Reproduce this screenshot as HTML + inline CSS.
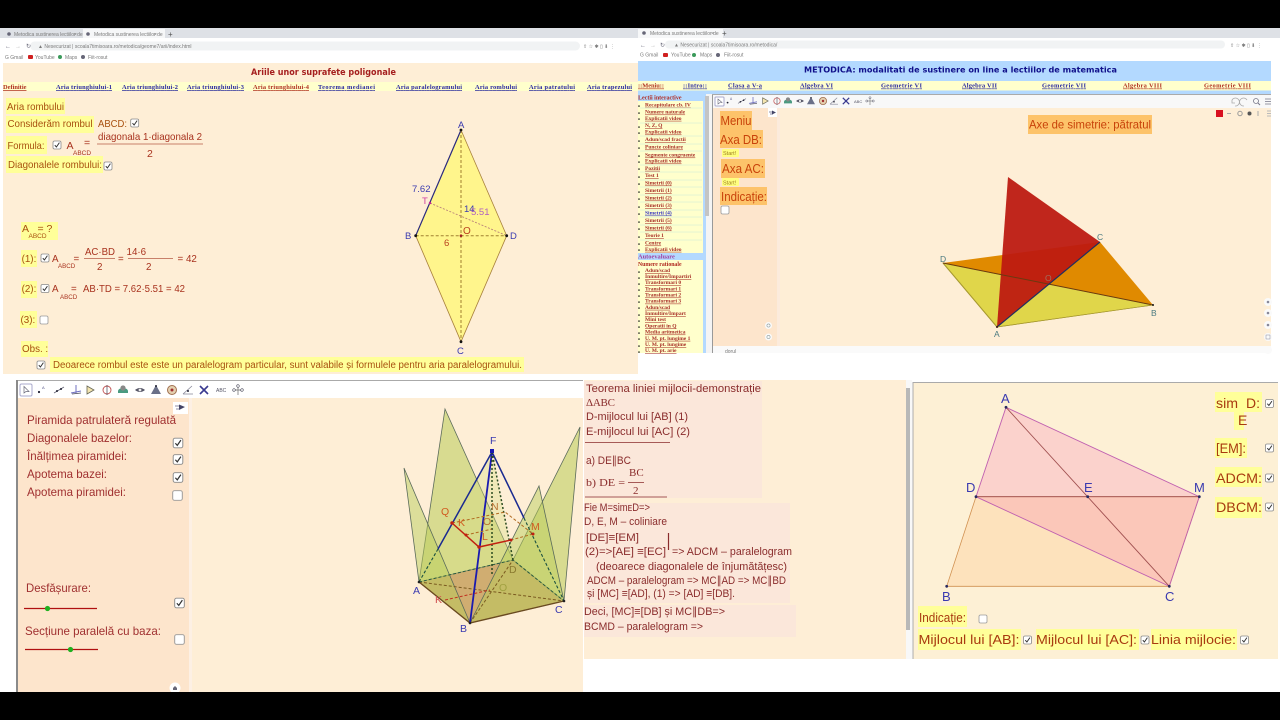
<!DOCTYPE html>
<html lang="ro"><head><meta charset="utf-8"><title>Metodica</title>
<style>
html,body{margin:0;padding:0;background:#fff;width:1280px;height:720px;overflow:hidden}
svg{display:block;filter:blur(.35px)}
text{font-family:"Liberation Sans",sans-serif}
.r{fill:#a8321e}
.o{fill:#a8500f}
.h{fill:#ffff99}
.nav{font:bold 6.4px "Liberation Serif",serif;text-decoration:underline;fill:#2a2aa0}
.navr{fill:#b03020}
.sb{font:bold 5.5px "Liberation Serif",serif;text-decoration:underline;fill:#a83028}
.c{fill:#8a2c2c;font-size:11px}
.g{fill:#7a7a7a;font-size:5px}
.bl{fill:#3a3ab0}
</style></head><body>
<svg width="1280" height="720" viewBox="0 0 1280 720" xmlns="http://www.w3.org/2000/svg">
<defs>
<g id="cb"><rect x="-4" y="-4" width="8" height="8" rx="1.5" fill="#fff" stroke="#8a8a8a" stroke-width=".8"/><path d="M-2.2 .2L-.6 2L2.4-2.4" fill="none" stroke="#333" stroke-width="1"/></g>
<g id="ce"><rect x="-4" y="-4" width="8" height="8" rx="1.5" fill="#fff" stroke="#9a9a9a" stroke-width=".8"/></g>
<g id="t1"><circle cx="-3" cy="2" r="1.1" fill="#223"/><text x="0" y="-1" font-size="4" fill="#558">A</text></g>
<g id="t2"><path d="M-5 3L5-3" stroke="#667" stroke-width=".8"/><circle cx="-2" cy="1" r="1" fill="#223"/><circle cx="2" cy="-1" r="1" fill="#223"/></g>
<g id="t3"><path d="M-5 3L5 1M0-5V3" stroke="#7070c0" stroke-width="1"/><path d="M-4 4L5 3" stroke="#445" stroke-width=".8"/></g>
<g id="t4"><path d="M-3-4L4 0L-3 4Z" fill="#f5e6b0" stroke="#665" stroke-width=".8"/></g>
<g id="t5"><circle r="4" fill="none" stroke="#c05050" stroke-width=".9"/><path d="M0-5V5" stroke="#445" stroke-width=".7"/></g>
<g id="t6"><path d="M-5 1A5 3 0 0 1 5 1V3H-5Z" fill="#4a9a80"/><circle cy="-2" r="2.6" fill="#888"/></g>
<g id="t7"><path d="M-5 0Q0-4 5 0Q0 4-5 0Z" fill="#556"/><circle r="1.4" fill="#eee"/></g>
<g id="t8"><path d="M0-5L5 4H-5Z" fill="#6a7088"/><circle cy="-4" r="1" fill="#223"/></g>
<g id="t9"><circle r="4.5" fill="#e4d0b0" stroke="#a07050"/><circle r="1.5" fill="#a03030"/></g>
<g id="t10"><path d="M-5 4L4-4M-5 4H5" stroke="#889" stroke-width=".8" fill="none"/><circle cx="0" cy="1" r="1" fill="#223"/></g>
<g id="t11"><path d="M-4-4L4 4M4-4L-4 4" stroke="#3a3a90" stroke-width="1.6"/></g>
<g id="t13"><path d="M0-5V5M-5 0H5" stroke="#888" stroke-width=".9"/><circle cx="-4" r="1.3" fill="#fff" stroke="#445" stroke-width=".6"/><circle cy="-4" r="1.3" fill="#fff" stroke="#445" stroke-width=".6"/><circle cx="4" r="1.3" fill="#fff" stroke="#445" stroke-width=".6"/></g>
</defs>

<rect width="1280" height="720" fill="#fff"/>

<!-- PANEL 1 -->
<rect x="0" y="28" width="638" height="10" fill="#dee1e6"/>
<rect x="83" y="29" width="82" height="9" fill="#f6f7f8"/>
<circle cx="9" cy="34" r="1.8" fill="#667"/><text x="14" y="36" class="g">Metodica sustinerea lectiilor de</text><text x="74" y="36" class="g">×</text>
<circle cx="88" cy="34" r="1.8" fill="#667"/><text x="94" y="36" class="g">Metodica sustinerea lectiilor de</text><text x="154" y="36" class="g">×</text><text x="168" y="37" font-size="8" fill="#555">+</text>
<rect x="0" y="38" width="638" height="25" fill="#fff"/>
<rect x="30" y="41.5" width="550" height="9" rx="4.5" fill="#f1f3f4"/>
<text x="5" y="48" font-size="6" fill="#667">←</text><text x="15" y="48" font-size="6" fill="#bbb">→</text><text x="26" y="48" font-size="6" fill="#667">↻</text>
<text x="38" y="48" class="g">▲ Nesecurizat | scoala7timisoara.ro/metodica/geome7/arii/index.html</text>
<text x="583" y="48" class="g">⇧ ☆ ✱ ▯ ⬇ ⋮</text>
<text x="5" y="59" class="g">G Gmail</text><rect x="28" y="55" width="5" height="4" rx="1" fill="#d02020"/><text x="35" y="59" class="g">YouTube</text><circle cx="60" cy="57" r="2" fill="#3a9a5a"/><text x="65" y="59" class="g">Maps</text><circle cx="83" cy="57" r="2" fill="#667"/><text x="88" y="59" class="g">Fiit-rosut</text>
<rect x="3" y="63" width="635" height="311" fill="#feeed6"/>
<text x="251" y="75" style="font-family:'DejaVu Sans',sans-serif;font-weight:bold;font-size:8.8px" fill="#a51e1e" textLength="145" lengthAdjust="spacingAndGlyphs">Ariile unor suprafete poligonale</text>
<rect x="3" y="82" width="635" height="9" fill="#ffffcc"/>
<g class="nav">
<text x="3" y="89" class="nav navr">Definitie</text>
<text x="56" y="89" class="nav" textLength="56">Aria triunghiului-1</text>
<text x="122" y="89" class="nav" textLength="56">Aria triunghiului-2</text>
<text x="187" y="89" class="nav" textLength="57">Aria triunghiului-3</text>
<text x="253" y="89" class="nav navr" textLength="56">Aria triunghiului-4</text>
<text x="318" y="89" class="nav" textLength="57">Teorema medianei</text>
<text x="396" y="89" class="nav" textLength="66">Aria paralelogramului</text>
<text x="475" y="89" class="nav" textLength="42">Aria rombului</text>
<text x="529" y="89" class="nav" textLength="46">Aria patratului</text>
<text x="587" y="89" class="nav" textLength="45">Aria trapezului</text>
</g>
<g class="h">
<rect x="6" y="98" width="59" height="16"/><rect x="6" y="116" width="88" height="17"/><rect x="6" y="136" width="41" height="18"/><rect x="6" y="156" width="97" height="17"/>
<rect x="21" y="222" width="37" height="18"/><rect x="21" y="250" width="16" height="17"/><rect x="21" y="281" width="16" height="17"/><rect x="20" y="311" width="17" height="17"/>
<rect x="21" y="341" width="27" height="16"/><rect x="50" y="357" width="474" height="15"/>
</g>
<g font-size="10.5" class="o">
<text x="7" y="110" textLength="57" lengthAdjust="spacingAndGlyphs">Aria rombului</text>
<text x="7.5" y="127" textLength="85" lengthAdjust="spacingAndGlyphs">Considerăm rombul</text>
<text x="98" y="127" textLength="29" lengthAdjust="spacingAndGlyphs">ABCD:</text>
<text x="7.5" y="149" textLength="37" lengthAdjust="spacingAndGlyphs">Formula:</text>
<text x="8" y="168" textLength="94" lengthAdjust="spacingAndGlyphs">Diagonalele rombului:</text>
<text x="22" y="232">A</text><text x="28.5" y="238" font-size="6.5">ABCD</text><text x="37.5" y="232">= ?</text>
</g>
<g font-size="10.5" class="r">
<text x="66.5" y="149">A</text><text x="73" y="155" font-size="6.5">ABCD</text><text x="84" y="146">=</text>
<text x="98" y="140" textLength="104" lengthAdjust="spacingAndGlyphs">diagonala 1·diagonala 2</text>
<text x="147" y="157">2</text>
</g>
<rect x="97" y="143.5" width="106" height="1" fill="#c8806a"/>
<use href="#cb" x="134.7" y="123"/><use href="#cb" x="57" y="145"/><use href="#cb" x="108" y="166"/>
<g font-size="9.8" class="r">
<text x="21.6" y="262" class="o">(1):</text><text x="52" y="262">A</text><text x="58" y="268" font-size="6.2">ABCD</text><text x="73.5" y="262">=</text>
<text x="85" y="255" textLength="30" lengthAdjust="spacingAndGlyphs">AC·BD</text><text x="97" y="270">2</text><text x="118" y="262">=</text>
<text x="126.5" y="255">14·6</text><text x="146" y="270">2</text><text x="177.5" y="262">= 42</text>
<text x="21.6" y="292" class="o">(2):</text><text x="52" y="292">A</text><text x="60" y="299" font-size="6.2">ABCD</text><text x="71" y="292">=</text>
<text x="83" y="292" textLength="102" lengthAdjust="spacingAndGlyphs">AB·TD = 7.62·5.51 = 42</text>
<text x="20.5" y="323" class="o">(3):</text><text x="22" y="352" class="o">Obs. :</text>
<text x="53" y="368" class="o" textLength="469" lengthAdjust="spacingAndGlyphs">Deoarece rombul este este un paralelogram particular, sunt valabile și formulele pentru aria paralelogramului.</text>
</g>
<rect x="84" y="258" width="31" height="1" fill="#c8806a"/><rect x="128" y="258" width="45" height="1" fill="#c8806a"/>
<use href="#cb" x="45" y="258"/><use href="#cb" x="45" y="288.5"/><use href="#ce" x="44" y="320"/><use href="#cb" x="41" y="365"/>
<!-- rhombus -->
<path d="M461 130L506.7 235.7L461 341.7L415.7 235.7Z" fill="#fff58c" stroke="#a8803c" stroke-width=".8"/>
<path d="M461 130L415.7 235.7" stroke="#2a2a80" stroke-width="1.2"/>
<path d="M461 130V341.7M415.7 235.7H506.7" stroke="#a08030" stroke-width="1" stroke-dasharray="3 2" fill="none"/>
<path d="M430 203L506.7 235.7" stroke="#b8807a" stroke-width=".9" stroke-dasharray="2 1.5"/>
<g fill="#111"><circle cx="461" cy="130" r="1.4"/><circle cx="415.7" cy="235.7" r="1.4"/><circle cx="506.7" cy="235.7" r="1.4"/><circle cx="461" cy="341.7" r="1.4"/></g>
<circle cx="461" cy="235.7" r="1.3" fill="#a02020"/><circle cx="430" cy="203" r="1.2" fill="#c02090"/>
<g font-size="9.5">
<text x="458" y="128" class="bl">A</text><text x="412" y="192" class="bl">7.62</text><text x="422" y="204" fill="#d040a0">T</text>
<text x="464" y="212" class="bl">14</text><text x="471" y="215" fill="#b060c0">5.51</text><text x="463" y="234" fill="#b84020" font-size="10">O</text>
<text x="405" y="239" class="bl">B</text><text x="510" y="239" class="bl">D</text><text x="444" y="246" fill="#b84020">6</text><text x="457" y="354" class="bl">C</text>
</g>

<!-- PANEL 2 -->
<rect x="638" y="28" width="642" height="10" fill="#dee1e6"/>
<rect x="638" y="29" width="85" height="9" fill="#f6f7f8"/>
<circle cx="644" cy="33" r="1.8" fill="#667"/><text x="650" y="35" class="g">Metodica sustinerea lectiilor de</text><text x="711" y="35" class="g">×</text><text x="722" y="36" font-size="8" fill="#555">+</text>
<rect x="638" y="38" width="642" height="23" fill="#fff"/>
<rect x="665" y="40.5" width="560" height="8" rx="4" fill="#f1f3f4"/>
<text x="640" y="47" font-size="6" fill="#667">←</text><text x="650" y="47" font-size="6" fill="#bbb">→</text><text x="660" y="47" font-size="6" fill="#667">↻</text>
<text x="674" y="46.5" class="g">▲ Nesecurizat | scoala7timisoara.ro/metodica/</text>
<text x="1230" y="47" class="g">⇧ ☆ ✱ ▯ ⬇ ⋮</text>
<text x="640" y="56.5" class="g">G Gmail</text><rect x="663" y="53" width="5" height="4" rx="1" fill="#d02020"/><text x="671" y="56.5" class="g">YouTube</text><circle cx="694" cy="55" r="2" fill="#3a9a5a"/><text x="700" y="56.5" class="g">Maps</text><circle cx="718" cy="55" r="2" fill="#667"/><text x="724" y="56.5" class="g">Fiit-rosut</text>
<rect x="638" y="61" width="633" height="20" fill="#b3d9ff"/>
<text x="804" y="72.5" style="font-family:'DejaVu Sans',sans-serif;font-weight:bold;font-size:8.3px" fill="#10108a" textLength="313" lengthAdjust="spacingAndGlyphs">METODICA: modalitati de sustinere on line a lectiilor de matematica</text>
<rect x="638" y="81" width="633" height="9.5" fill="#ffffcc"/>
<rect x="638" y="90.5" width="633" height="3.5" fill="#b3d9ff"/>
<g>
<text x="638" y="87.5" class="nav navr" textLength="26">::Meniu::</text><text x="683" y="87.5" class="nav" textLength="24">::Intro::</text>
<text x="728" y="87.5" class="nav" textLength="34">Clasa a V-a</text><text x="800" y="87.5" class="nav" textLength="33">Algebra VI</text>
<text x="881" y="87.5" class="nav" textLength="41">Geometrie VI</text><text x="962" y="87.5" class="nav" textLength="35">Algebra VII</text>
<text x="1042" y="87.5" class="nav" textLength="44">Geometrie VII</text><text x="1123" y="87.5" class="nav navr" textLength="39">Algebra VIII</text>
<text x="1204" y="87.5" class="nav navr" textLength="47">Geometrie VIII</text>
</g>
<!-- sidebar -->
<rect x="638" y="94" width="65" height="259" fill="#ffffcc"/>
<rect x="638" y="94" width="65" height="7" fill="#b3d9ff"/>
<rect x="638" y="253" width="65" height="7" fill="#b3d9ff"/>
<rect x="703" y="94" width="3" height="259" fill="#b3d9ff"/>
<rect x="706" y="94" width="6" height="259" fill="#f4f4f4"/><rect x="705" y="96" width="4" height="120" fill="#c4c4c4"/>
<text x="638" y="99.5" style="font:bold 6px 'Liberation Serif',serif" fill="#b02820">Lectii interactive</text>
<text x="638" y="258.5" style="font:bold 6.4px 'Liberation Serif',serif" fill="#a040a0">Autoevaluare</text>
<text x="638" y="266" style="font:bold 5.8px 'Liberation Serif',serif" fill="#b02820">Numere rationale</text>
<g>
<text x="645" y="106.5" class="sb">Recapitulare cb. IV</text><text x="645" y="113.5" class="sb">Numere naturale</text><text x="645" y="119.8" class="sb">Explicatii video</text>
<text x="645" y="127" class="sb">N, Z, Q</text><text x="645" y="133.5" class="sb">Explicatii video</text><text x="645" y="141" class="sb">Adun/scad fractii</text>
<text x="645" y="148.5" class="sb">Puncte coliniare</text><text x="645" y="156.5" class="sb">Segmente congruente</text><text x="645" y="162.5" class="sb">Explicatii video</text>
<text x="645" y="169.8" class="sb">Pozitii</text><text x="645" y="177" class="sb">Test 1</text><text x="645" y="184.5" class="sb">Simetrii (0)</text>
<text x="645" y="192" class="sb">Simetrii (1)</text><text x="645" y="199.5" class="sb">Simetrii (2)</text><text x="645" y="207" class="sb">Simetrii (3)</text>
<text x="645" y="214.5" class="sb" style="fill:#3a3ac0">Simetrii (4)</text><text x="645" y="222" class="sb">Simetrii (5)</text><text x="645" y="229.5" class="sb">Simetrii (6)</text>
<text x="645" y="237" class="sb">Teorie 1</text><text x="645" y="244.5" class="sb">Centre</text><text x="645" y="250.8" class="sb">Explicatii video</text>
<text x="645" y="272" class="sb">Adun/scad</text><text x="645" y="278" class="sb">Inmultire/Impartiri</text><text x="645" y="284" class="sb">Transformari 0</text>
<text x="645" y="290.3" class="sb">Transformari 1</text><text x="645" y="296.5" class="sb">Transformari 2</text><text x="645" y="302.6" class="sb">Transformari 3</text>
<text x="645" y="308.8" class="sb">Adun/scad</text><text x="645" y="315" class="sb">Inmultire/Impart</text><text x="645" y="321" class="sb">Mini test</text>
<text x="645" y="327.3" class="sb">Operatii in Q</text><text x="645" y="333.5" class="sb">Media aritmetica</text><text x="645" y="339.8" class="sb">U. M. pt. lungime 1</text>
<text x="645" y="346" class="sb">U. M. pt. lungime</text><text x="645" y="352" class="sb">U. M. pt. arie</text>
</g>
<path d="M639 106v.1M639 113v.1M639 119v.1M639 127v.1M639 133v.1M639 141v.1M639 148v.1M639 156v.1M639 162v.1M639 169v.1M639 177v.1M639 184v.1M639 192v.1M639 199v.1M639 207v.1M639 214v.1M639 222v.1M639 229v.1M639 237v.1M639 244v.1M639 250v.1M639 272v.1M639 278v.1M639 284v.1M639 290v.1M639 296v.1M639 302v.1M639 308v.1M639 315v.1M639 321v.1M639 327v.1M639 333v.1M639 339v.1M639 346v.1M639 352v.1" stroke="#222" stroke-width="1.6" stroke-linecap="round"/>
<path d="M640 108H702M640 123H702M640 136H702M640 144H702M640 151H702M640 165H702M640 172H702M640 180H702M640 187H702M640 195H702M640 202H702M640 210H702M640 217H702M640 225H702M640 232H702M640 240H702" stroke="#c8e8d8" stroke-width=".5"/>
<!-- geogebra -->
<rect x="712" y="94" width="559" height="14" fill="#f8f8f8"/>
<rect x="712" y="94" width="559" height="1" fill="#aaa"/>
<rect x="712" y="95" width="1" height="258" fill="#999"/>
<rect x="713" y="108" width="65" height="238" fill="#fde5cc"/>
<rect x="778" y="108" width="493" height="238" fill="#feeed6"/>
<rect x="777" y="108" width="3" height="238" fill="#fcebdc"/>
<rect x="713" y="346" width="558" height="7" fill="#fafafa"/>
<text x="725" y="353" class="g">dorul</text>
<rect x="715" y="97" width="9" height="9" rx="1" fill="#fff" stroke="#aac"/>
<path d="M718 99V104L720 102.5H722Z" fill="none" stroke="#667" stroke-width=".6"/>
<g transform="translate(730 101) scale(.8)"><use href="#t1"/></g><g transform="translate(742 101) scale(.8)"><use href="#t2"/></g><g transform="translate(753 101) scale(.8)"><use href="#t3"/></g><g transform="translate(765 101) scale(.8)"><use href="#t4"/></g><g transform="translate(777 101) scale(.8)"><use href="#t5"/></g><g transform="translate(788 101) scale(.8)"><use href="#t6"/></g><g transform="translate(800 101) scale(.8)"><use href="#t7"/></g><g transform="translate(811 101) scale(.8)"><use href="#t8"/></g><g transform="translate(823 101) scale(.8)"><use href="#t9"/></g><g transform="translate(834 101) scale(.8)"><use href="#t10"/></g><g transform="translate(846 101) scale(.8)"><use href="#t11"/></g><text x="854" y="103" font-size="4" fill="#556">ABC</text><g transform="translate(870 101) scale(.8)"><use href="#t13"/></g>
<rect x="768" y="108" width="9" height="9" fill="#fff"/><path d="M769 112H773M770 114H773" stroke="#668" stroke-width=".7"/><path d="M772 110.5L776 112.5L772 114.5Z" fill="#446"/>
<path d="M1232 100A4 4 0 1 1 1235 106M1232 100V103H1235M1247 100A4 4 0 1 0 1244 106" fill="none" stroke="#aaa" stroke-width=".8"/>
<circle cx="1256" cy="101" r="2.5" fill="none" stroke="#778" stroke-width=".8"/><path d="M1258 103L1260 105" stroke="#778"/><path d="M1265 99H1271M1265 101.5H1271M1265 104H1271" stroke="#778" stroke-width=".8"/>
<rect x="1216" y="110" width="7" height="7" fill="#d81020"/><path d="M1227 113.5H1231" stroke="#aaa"/><circle cx="1240" cy="113.5" r="2.2" fill="none" stroke="#999"/><circle cx="1249.5" cy="113.5" r="2" fill="#555"/><path d="M1258 111V116" stroke="#aaa"/><path d="M1267 111H1271M1267 113.5H1271M1267 116H1271" stroke="#bbb"/>
<g fill="#fdc36a"><rect x="720" y="111" width="32" height="20"/><rect x="720" y="130" width="43" height="18"/><rect x="721" y="159" width="44" height="19"/><rect x="720" y="187" width="47" height="18"/><rect x="1028" y="115" width="124" height="19"/></g>
<rect x="722" y="149" width="17" height="8" rx="1" fill="#ffff80"/><rect x="722" y="178" width="17" height="8" rx="1" fill="#ffff80"/>
<g fill="#c8420a">
<text x="720.5" y="125" font-size="12.5" textLength="31" lengthAdjust="spacingAndGlyphs">Meniu</text><text x="720" y="144" font-size="12.5" textLength="42" lengthAdjust="spacingAndGlyphs">Axa DB:</text>
<text x="722" y="173" font-size="12.5" textLength="42" lengthAdjust="spacingAndGlyphs">Axa AC:</text><text x="721" y="201" font-size="12.5" textLength="46" lengthAdjust="spacingAndGlyphs">Indicație:</text>
<text x="1029" y="128.5" font-size="11.8" textLength="122" lengthAdjust="spacingAndGlyphs">Axe de simetrie: pătratul</text>
<text x="723" y="155" font-size="5.5" fill="#a08020">Start!</text><text x="723" y="184.5" font-size="5.5" fill="#a08020">Start!</text>
</g>
<use href="#ce" x="725" y="210"/>
<g><circle cx="768.5" cy="325.5" r="3.5" fill="#fafafa"/><circle cx="768.5" cy="337" r="3.5" fill="#fafafa"/></g>
<g fill="none" stroke="#8a9a9a" stroke-width=".6"><circle cx="768.5" cy="325.5" r="1.6"/><circle cx="768.5" cy="337" r="1.6"/></g>
<g fill="#fafafa"><circle cx="1268" cy="302" r="4"/><circle cx="1268" cy="313" r="4"/><circle cx="1268" cy="325" r="4"/><circle cx="1268" cy="337" r="4"/><circle cx="1268" cy="350" r="4"/></g>
<g fill="#889"><circle cx="1268" cy="302" r="1.3"/><circle cx="1268" cy="313" r="1.3"/><circle cx="1268" cy="325" r="1.3"/><rect x="1266" y="335" width="4" height="4" fill="none" stroke="#889" stroke-width=".5"/></g>
<!-- squares -->
<path d="M943 263L997 327L1153 305Z" fill="#e0d64a" stroke="#a89a30" stroke-width=".7"/>
<path d="M943 263L1100 242L1153 305Z" fill="#e08a00"/>
<path d="M943 263L997 327" stroke="#a89a30" stroke-width="1"/>
<path d="M1008 177L1100 242L997 327Z" fill="#bc1a10" fill-opacity=".94"/>
<path d="M943 263L1153 305" stroke="#6a3a10" stroke-width="1"/>
<path d="M997 327L1100 242" stroke="#203060" stroke-width="1.2"/>
<path d="M997 327L1153 305" stroke="#a89a30" stroke-width=".7"/>
<g fill="#4a7a80" font-size="8.5">
<text x="940" y="262">D</text><text x="1097" y="240">C</text><text x="1151" y="316">B</text><text x="994" y="337">A</text><text x="1045" y="281" fill="#a07060">O</text>
</g>
<circle cx="1153" cy="305" r="1" fill="#111"/><circle cx="997" cy="327" r="1" fill="#311"/>

<!-- PANEL 3 -->
<rect x="16" y="380" width="567" height="18" fill="#fff"/>
<rect x="16" y="380" width="567" height="1" fill="#aaa"/>
<rect x="16" y="380" width="2" height="312" fill="#8a8a8a"/>
<rect x="18" y="398" width="172" height="294" fill="#fde5cc"/>
<rect x="191" y="398" width="392" height="294" fill="#feeed6"/>
<rect x="189" y="398" width="3" height="294" fill="#fdf0e4"/>
<rect x="20" y="384" width="12" height="12" rx="1.5" fill="#fff" stroke="#aac"/>
<path d="M24 386.5V393L26 391.5H29Z" fill="none" stroke="#667" stroke-width=".7"/>
<use href="#t1" x="42" y="390"/><use href="#t2" x="59" y="390"/><use href="#t3" x="76" y="390"/><use href="#t4" x="90" y="390"/><use href="#t5" x="107" y="390"/><use href="#t6" x="123" y="390"/><use href="#t7" x="140" y="390"/><use href="#t8" x="156" y="390"/><use href="#t9" x="172" y="390"/><use href="#t10" x="188" y="390"/><use href="#t11" x="204" y="390"/><text x="216" y="392" font-size="5" fill="#556">ABC</text><use href="#t13" x="238" y="390"/>
<rect x="173" y="402" width="15" height="12" fill="#fff"/><path d="M175 406H180M176 409H180" stroke="#668" stroke-width=".8"/><path d="M179 404.5L185 407L179 410Z" fill="#446"/>
<g fill="#a03030" font-size="11.8">
<text x="27" y="424" textLength="149" lengthAdjust="spacingAndGlyphs">Piramida patrulateră regulată</text>
<text x="27" y="442" textLength="105" lengthAdjust="spacingAndGlyphs">Diagonalele bazelor:</text>
<text x="27" y="460" textLength="100" lengthAdjust="spacingAndGlyphs">Înălțimea piramidei:</text>
<text x="27" y="478" textLength="80" lengthAdjust="spacingAndGlyphs">Apotema bazei:</text>
<text x="27" y="496" textLength="99" lengthAdjust="spacingAndGlyphs">Apotema piramidei:</text>
<text x="26" y="592" textLength="65" lengthAdjust="spacingAndGlyphs">Desfășurare:</text>
<text x="25" y="635" textLength="136" lengthAdjust="spacingAndGlyphs">Secțiune paralelă cu baza:</text>
</g>
<g transform="translate(178 443) scale(1.2)"><use href="#cb"/></g><g transform="translate(178 459.5) scale(1.2)"><use href="#cb"/></g><g transform="translate(178 477.5) scale(1.2)"><use href="#cb"/></g><g transform="translate(177.5 495.5) scale(1.2)"><use href="#ce"/></g>
<g transform="translate(179.5 603) scale(1.2)"><use href="#cb"/></g><g transform="translate(179.5 639.5) scale(1.2)"><use href="#ce"/></g>
<path d="M24 608.5H97M25 649.5H98" stroke="#b01010" stroke-width="1.3"/>
<circle cx="47.5" cy="608.5" r="2.6" fill="#20b020"/><circle cx="70.5" cy="649.5" r="2.6" fill="#20b020"/>
<circle cx="175" cy="688" r="5.5" fill="#fff"/><path d="M173 690V688L175 686L177 688V690Z" fill="#667"/>
<!-- pyramid -->
<path d="M419 582L470 623L564 601L513 560Z" fill="#cc9469" stroke="#8a6a30" stroke-width=".6"/>
<g fill="#b8cc58" fill-opacity=".55" stroke="#5a6a5a" stroke-width=".8">
<path d="M419 582L513 560L445 409Z"/>
<path d="M564 601L513 560L580 427Z"/>
</g>
<path d="M419 582L470 623L492 452Z M470 623L564 601L492 452Z M419 582L513 560L492 452Z M564 601L513 560L492 452Z" fill="#d8de82" fill-opacity=".35"/>
<g fill="#b8cc58" fill-opacity=".48" stroke="#5a6a5a" stroke-width=".8">
<path d="M419 582L470 623L404 468Z"/>
<path d="M470 623L564 601L539 486Z"/>
</g>
<path d="M419 582L470 623L564 601" fill="none" stroke="#6a4a20" stroke-width="1.4"/>
<g fill="none" stroke-width="1">
<path d="M419 582L564 601M470 623L513 560" stroke="#7a5a20" stroke-dasharray="3 2"/>
<path d="M419 582L513 560L564 601" stroke="#2a5a40" stroke-dasharray="3 2"/>
<path d="M492 452L470 623" stroke="#1a1ab0" stroke-width="1.8"/>
<path d="M492 452L438 549M492 452L524 518" stroke="#1a2a90" stroke-width="1.5"/>
<path d="M438 549L419 582M524 518L564 601" stroke="#1a5040" stroke-width="1.1" stroke-dasharray="3 2"/>
<path d="M492 452V575M492 452L513 560" stroke="#2a4a20" stroke-width="1.5" stroke-dasharray="2 2"/>
<path d="M452 523L505 512L533 534L511 540M466 535L492 529" stroke="#b06a20" stroke-width="1" stroke-dasharray="3 2"/>
<path d="M452 523L479 547L511 540" stroke="#c02010" stroke-width="1.5"/>
<path d="M445 600L490 590" stroke="#c03020" stroke-dasharray="3 2"/>
</g>
<g fill="#c02010"><circle cx="452" cy="523" r="1.7"/><circle cx="479" cy="547" r="1.7"/><circle cx="511" cy="540" r="1.5"/><circle cx="466" cy="535" r="1.5"/><circle cx="533" cy="534" r="1.5"/></g>
<rect x="490" y="449" width="4" height="4" fill="#1a1ab0"/>
<g fill="#222"><circle cx="419" cy="582" r="1.3"/><circle cx="470" cy="623" r="1.3"/><circle cx="564" cy="601" r="1.3"/></g>
<g font-size="10.5">
<text x="413" y="594" class="bl">A</text><text x="460" y="632" class="bl">B</text><text x="555" y="613" class="bl">C</text><text x="490" y="444" class="bl">F</text>
<text x="441" y="515" fill="#d05a20">Q</text><text x="435" y="603" fill="#d05050">K</text><text x="458" y="526" fill="#d05a20">K</text><text x="483" y="525" fill="#b87030">O</text><text x="491" y="510" fill="#b87030">N</text><text x="482" y="540" fill="#d05a20">L</text><text x="531" y="530" fill="#d05a20">M</text><text x="509" y="573" fill="#8a7a30">D</text><text x="499" y="591" fill="#a0a040">O</text>
</g>

<!-- PANEL 4 -->
<rect x="584" y="380" width="322" height="279" fill="#feeed6"/>
<rect x="906" y="380" width="6" height="279" fill="#f8f8f8"/><rect x="906" y="388" width="4" height="242" fill="#b8b8b8"/>
<g fill="#fbe7da"><rect x="584" y="381" width="178" height="117"/><rect x="584" y="503" width="206" height="100"/><rect x="584" y="605" width="212" height="32"/></g>
<g class="c">
<text x="586" y="392" textLength="175" lengthAdjust="spacingAndGlyphs" class="c">Teorema liniei mijlocii-demonstrație</text>
<text x="586" y="406" class="c" style="font-family:'Liberation Serif',serif" textLength="29">ΔABC</text>
<text x="586" y="420" class="c" textLength="102" lengthAdjust="spacingAndGlyphs">D-mijlocul lui [AB] (1)</text>
<text x="586" y="435" class="c" textLength="104" lengthAdjust="spacingAndGlyphs">E-mijlocul lui [AC]  (2)</text>
<text x="586" y="464" class="c" textLength="45" lengthAdjust="spacingAndGlyphs">a) DE∥BC</text>
<text x="586" y="486" class="c" style="font-family:'Liberation Serif',serif" textLength="39" lengthAdjust="spacingAndGlyphs">b) DE =</text>
<text x="629" y="476" class="c" style="font-family:'Liberation Serif',serif">BC</text>
<text x="633" y="494" class="c" style="font-family:'Liberation Serif',serif">2</text>
<text x="584" y="511" class="c" textLength="66" lengthAdjust="spacingAndGlyphs">Fie M=simᴇD=&gt;</text>
<text x="584" y="525" class="c" textLength="83" lengthAdjust="spacingAndGlyphs">D, E, M – coliniare</text>
<text x="586" y="541" class="c" textLength="53" lengthAdjust="spacingAndGlyphs">[DE]≡[EM]</text>
<text x="585" y="555" class="c" textLength="81" lengthAdjust="spacingAndGlyphs">(2)=&gt;[AE] ≡[EC]</text>
<text x="672" y="555" class="c" textLength="120" lengthAdjust="spacingAndGlyphs">=&gt; ADCM – paralelogram</text>
<text x="596" y="570" class="c" textLength="191" lengthAdjust="spacingAndGlyphs">(deoarece diagonalele de înjumătățesc)</text>
<text x="587" y="584" class="c" textLength="199" lengthAdjust="spacingAndGlyphs">ADCM – paralelogram =&gt; MC∥AD =&gt; MC∥BD</text>
<text x="587" y="597" class="c" textLength="148" lengthAdjust="spacingAndGlyphs">și [MC] ≡[AD], (1) =&gt; [AD] ≡[DB].</text>
<text x="584" y="615" class="c" textLength="141" lengthAdjust="spacingAndGlyphs">Deci, [MC]≡[DB] și MC∥DB=&gt;</text>
<text x="584" y="630" class="c" textLength="119" lengthAdjust="spacingAndGlyphs">BCMD – paralelogram =&gt;</text>
</g>
<path d="M585 442.5H670M585 497H667M628 482.5H644" stroke="#8a2c2c" stroke-width=".8"/>
<path d="M668.5 533V550" stroke="#8a2c2c" stroke-width="1.2"/>

<!-- PANEL 5 -->
<rect x="913" y="382" width="365" height="277" fill="#fdf0d5"/>
<path d="M913 659V382.5H1278" fill="none" stroke="#aaa" stroke-width="1"/>
<path d="M976 496.7L946.7 586.3H1169.3L1199.3 496.7Z" fill="#fde2bc" stroke="#d09050" stroke-width=".8"/>
<path d="M1006 407.3L1199.3 496.7L1169.3 586.3L976 496.7Z" fill="#f87ab0" fill-opacity=".26" stroke="#c060b0" stroke-width=".9"/>
<path d="M976 496.7H1199.3M1006 407.3L1169.3 586.3" stroke="#a05050" stroke-width=".9"/>
<g fill="#2a2a60"><circle cx="1006" cy="407.3" r="1.4"/><circle cx="976" cy="496.7" r="1.4"/><circle cx="1087.7" cy="496.7" r="1.4"/><circle cx="1199.3" cy="496.7" r="1.4"/><circle cx="946.7" cy="586.3" r="1.4"/><circle cx="1169.3" cy="586.3" r="1.4"/></g>
<g font-size="13" class="bl">
<text x="1001" y="403">A</text><text x="966" y="492">D</text><text x="1084" y="492">E</text><text x="1194" y="492">M</text><text x="942" y="601">B</text><text x="1165" y="601">C</text>
</g>
<g class="h"><rect x="1215" y="392" width="47" height="20"/><rect x="1234" y="412" width="10" height="18"/><rect x="1215" y="438" width="32" height="20"/><rect x="1215" y="467" width="47" height="20"/><rect x="1215" y="497" width="47" height="21"/><rect x="918" y="606" width="49" height="21"/><rect x="918" y="629" width="103" height="21"/><rect x="1036" y="629" width="103" height="21"/><rect x="1151" y="629" width="86" height="21"/></g>
<g fill="#a83a10" font-size="14">
<text x="1216" y="408" textLength="22" lengthAdjust="spacingAndGlyphs">sim</text><text x="1246" y="408">D:</text><text x="1238" y="425">E</text>
<text x="1216" y="453" textLength="30" lengthAdjust="spacingAndGlyphs">[EM]:</text>
<text x="1216" y="483" textLength="46" lengthAdjust="spacingAndGlyphs">ADCM:</text>
<text x="1216" y="512" textLength="46" lengthAdjust="spacingAndGlyphs">DBCM:</text>
<text x="919" y="622" textLength="47" lengthAdjust="spacingAndGlyphs" font-size="13">Indicație:</text>
<text x="918.5" y="644" textLength="101" lengthAdjust="spacingAndGlyphs" font-size="13">Mijlocul lui [AB]:</text>
<text x="1036" y="644" textLength="101" lengthAdjust="spacingAndGlyphs" font-size="13">Mijlocul lui [AC]:</text>
<text x="1151" y="644" textLength="85" lengthAdjust="spacingAndGlyphs" font-size="13">Linia mijlocie:</text>
</g>
<use href="#cb" x="1269.5" y="403.5"/><use href="#cb" x="1269.5" y="448"/><use href="#cb" x="1269.5" y="478"/><use href="#cb" x="1269.5" y="507"/>
<use href="#ce" x="983" y="619"/><use href="#cb" x="1027.5" y="640"/><use href="#cb" x="1145" y="640"/><use href="#cb" x="1244.5" y="640"/>

<!-- letterbox -->
<rect x="0" y="0" width="1280" height="28" fill="#000"/>
<rect x="0" y="692" width="1280" height="28" fill="#000"/>
</svg>
</body></html>
